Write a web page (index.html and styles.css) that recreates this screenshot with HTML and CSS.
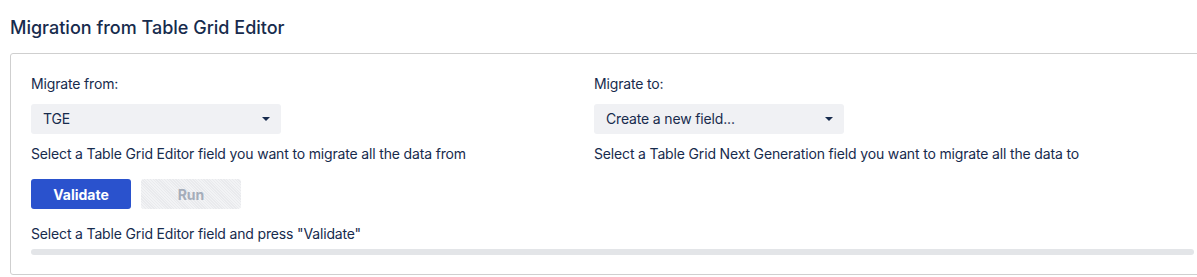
FILE: index.html
```html
<!DOCTYPE html>
<html>
<head>
<meta charset="utf-8">
<link rel="stylesheet" href="styles.css">
</head>
<body>
<div class="page">
  <h1 class="title">Migration from Table Grid Editor</h1>
  <div class="panel">
    <div class="columns">
      <div class="col">
        <div class="label">Migrate from:</div>
        <div class="select"><span>TGE</span><span class="caret"></span></div>
        <div class="help">Select a Table Grid Editor field you want to migrate all the data from</div>
      </div>
      <div class="col">
        <div class="label">Migrate to:</div>
        <div class="select"><span>Create a new field...</span><span class="caret"></span></div>
        <div class="help">Select a Table Grid Next Generation field you want to migrate all the data to</div>
      </div>
    </div>
    <div class="actions">
      <button class="btn btn-primary">Validate</button>
      <button class="btn btn-disabled" disabled>Run</button>
    </div>
    <div class="status">Select a Table Grid Editor field and press "Validate"</div>
    <div class="progress"></div>
  </div>
</div>
</body>
</html>
```
FILE: styles.css
```css
html, body {
  margin: 0;
  padding: 0;
  background: #fff;
  overflow: hidden;
}
body {
  font-family: Inter, "Noto Sans", "Liberation Sans", sans-serif;
  color: #172b4d;
  font-size: 14px;
  line-height: 20px;
  letter-spacing: -0.16px;
}
.page {
  padding: 16px 0 0 10px;
}
.title {
  margin: 0;
  font-size: 18px;
  line-height: 24px;
  font-weight: 500;
  letter-spacing: 0;
  color: #172b4d;
}
.panel {
  margin-top: 13px;
  width: 1166px;
  border: 1px solid #cfcfcf;
  border-radius: 3px;
  padding: 20px 20px 19px 20px;
}
.columns {
  display: flex;
}
.col {
  width: 563px;
  display: flex;
  flex-direction: column;
}
.label {
  height: 20px;
}
.select {
  margin-top: 10px;
  width: 250px;
  height: 30px;
  box-sizing: border-box;
  background: #f0f1f4;
  border-radius: 3px;
  display: flex;
  align-items: center;
  justify-content: space-between;
  padding: 0 11px 0 12px;
}
.caret {
  width: 0;
  height: 0;
  border-left: 4px solid transparent;
  border-right: 4px solid transparent;
  border-top: 4px solid #172b4d;
}
.help {
  margin-top: 10px;
}
.actions {
  margin-top: 15px;
  display: flex;
  gap: 10px;
}
.btn {
  width: 100px;
  height: 30px;
  border: none;
  border-radius: 3px;
  font-family: inherit;
  font-size: 14px;
  font-weight: 700;
  letter-spacing: 0;
  padding: 0;
}
.btn-primary {
  background: #2a52cd;
  color: #fff;
}
.btn-disabled {
  color: #a5adba;
  background: repeating-linear-gradient(45deg, #f2f3f5 0 1px, #e9eaed 1px 2px);
}
.status {
  margin-top: 15px;
}
.progress {
  margin-top: 5px;
  width: 1163px;
  height: 6px;
  border-radius: 3px;
  background: #e3e5e8;
}
```
